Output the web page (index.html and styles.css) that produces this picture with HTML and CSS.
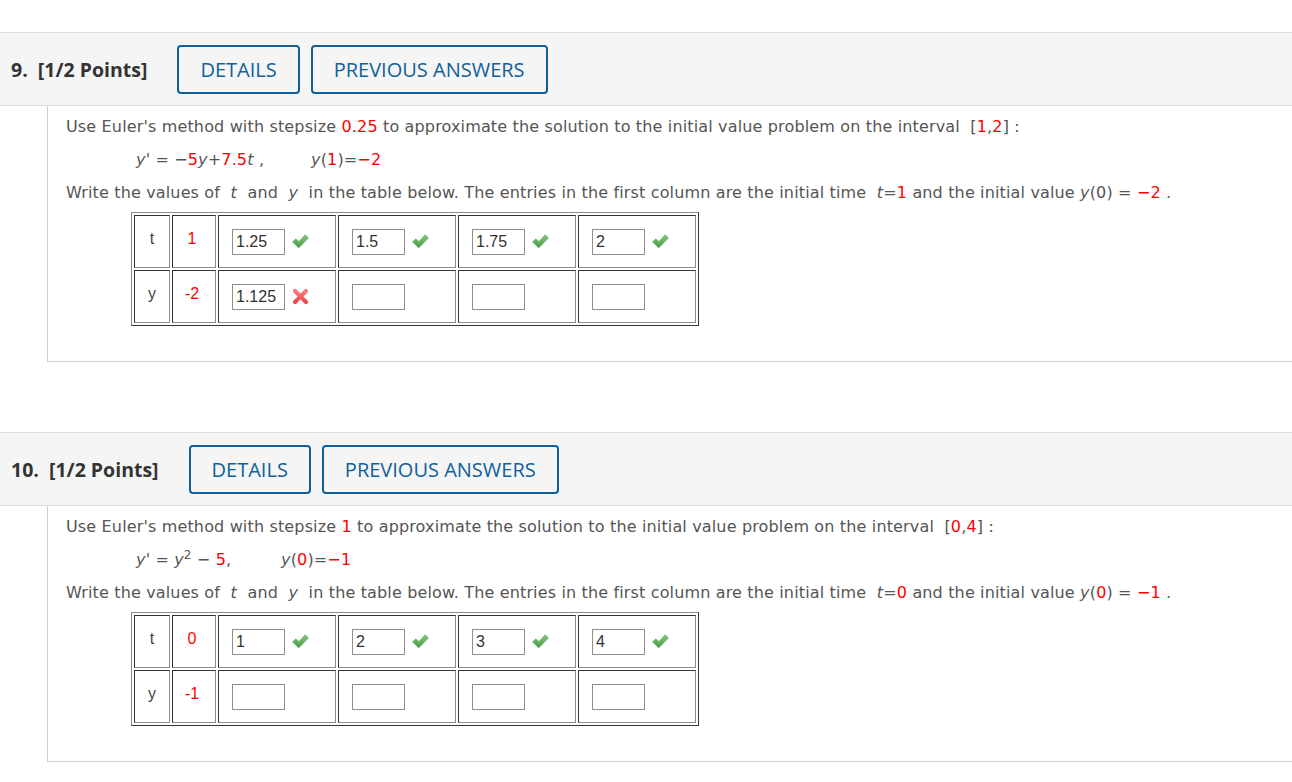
FILE: index.html
```html
<!DOCTYPE html>
<html>
<head>
<meta charset="utf-8">
<link rel="stylesheet" href="styles.css">
</head>
<body>
<svg width="0" height="0" class="defs">
  <defs>
    <linearGradient id="gck" x1="0" y1="0" x2="0" y2="1">
      <stop offset="0" stop-color="#86cf7f"/>
      <stop offset="1" stop-color="#3f9a3f"/>
    </linearGradient>
    <linearGradient id="gx" x1="0" y1="0" x2="0" y2="1">
      <stop offset="0" stop-color="#ff7b7b"/>
      <stop offset="1" stop-color="#e94848"/>
    </linearGradient>
  </defs>
</svg>

<div class="question first">
  <div class="q-header">
    <span class="q-title">9.&nbsp;&nbsp;[1/2 Points]</span>
    <button class="btn">DETAILS</button>
    <button class="btn">PREVIOUS ANSWERS</button>
  </div>
  <div class="q-body">
    <p class="line">Use Euler's method with stepsize <span class="red">0.25</span> to approximate the solution to the initial value problem on the interval &nbsp;[<span class="red">1</span>,<span class="red">2</span>] :</p>
    <p class="line eq"><span class="eq-a a1"><i>y</i>' = −<span class="red">5</span><i>y</i>+<span class="red">7.5</span><i>t</i> ,</span><span><i>y</i>(<span class="red">1</span>)=<span class="red">−2</span></span></p>
    <p class="line last">Write the values of &nbsp;<i>t</i>&nbsp; and &nbsp;<i>y</i>&nbsp; in the table below. The entries in the first column are the initial time &nbsp;<i>t</i>=<span class="red">1</span> and the initial value <i>y</i>(0) = <span class="red">−2</span> .</p>
    <table class="grid">
      <tr>
        <td class="h">t</td>
        <td class="v">1</td>
        <td class="in"><span class="box">1.25</span><svg class="ico" width="17" height="15" viewBox="0 0 17 15"><path d="M0.6 8.0 L3.8 4.8 L6.8 7.8 L13.2 0.8 L16.4 4.0 L6.8 13.8 Z" fill="url(#gck)" stroke="#4a9a4a" stroke-width="0.6" stroke-linejoin="round"/></svg></td>
        <td class="in"><span class="box">1.5</span><svg class="ico" width="17" height="15" viewBox="0 0 17 15"><path d="M0.6 8.0 L3.8 4.8 L6.8 7.8 L13.2 0.8 L16.4 4.0 L6.8 13.8 Z" fill="url(#gck)" stroke="#4a9a4a" stroke-width="0.6" stroke-linejoin="round"/></svg></td>
        <td class="in"><span class="box">1.75</span><svg class="ico" width="17" height="15" viewBox="0 0 17 15"><path d="M0.6 8.0 L3.8 4.8 L6.8 7.8 L13.2 0.8 L16.4 4.0 L6.8 13.8 Z" fill="url(#gck)" stroke="#4a9a4a" stroke-width="0.6" stroke-linejoin="round"/></svg></td>
        <td class="in"><span class="box">2</span><svg class="ico" width="17" height="15" viewBox="0 0 17 15"><path d="M0.6 8.0 L3.8 4.8 L6.8 7.8 L13.2 0.8 L16.4 4.0 L6.8 13.8 Z" fill="url(#gck)" stroke="#4a9a4a" stroke-width="0.6" stroke-linejoin="round"/></svg></td>
      </tr>
      <tr>
        <td class="h">y</td>
        <td class="v">-2</td>
        <td class="in"><span class="box">1.125</span><svg class="ico" width="17" height="17" viewBox="0 0 17 17"><path d="M3 3 L14 14 M14 3 L3 14" stroke="url(#gx)" stroke-width="4.2" stroke-linecap="round"/></svg></td>
        <td class="in"><span class="box"></span></td>
        <td class="in"><span class="box"></span></td>
        <td class="in"><span class="box"></span></td>
      </tr>
    </table>
  </div>
</div>

<div class="question second">
  <div class="q-header">
    <span class="q-title">10.&nbsp;&nbsp;[1/2 Points]</span>
    <button class="btn">DETAILS</button>
    <button class="btn">PREVIOUS ANSWERS</button>
  </div>
  <div class="q-body">
    <p class="line">Use Euler's method with stepsize <span class="red">1</span> to approximate the solution to the initial value problem on the interval &nbsp;[<span class="red">0</span>,<span class="red">4</span>] :</p>
    <p class="line eq"><span class="eq-a a2"><i>y</i>' = <i>y</i><sup>2</sup> − <span class="red">5</span>,</span><span><i>y</i>(<span class="red">0</span>)=<span class="red">−1</span></span></p>
    <p class="line last">Write the values of &nbsp;<i>t</i>&nbsp; and &nbsp;<i>y</i>&nbsp; in the table below. The entries in the first column are the initial time &nbsp;<i>t</i>=<span class="red">0</span> and the initial value <i>y</i>(<span class="red">0</span>) = <span class="red">−1</span> .</p>
    <table class="grid">
      <tr>
        <td class="h">t</td>
        <td class="v">0</td>
        <td class="in"><span class="box">1</span><svg class="ico" width="17" height="15" viewBox="0 0 17 15"><path d="M0.6 8.0 L3.8 4.8 L6.8 7.8 L13.2 0.8 L16.4 4.0 L6.8 13.8 Z" fill="url(#gck)" stroke="#4a9a4a" stroke-width="0.6" stroke-linejoin="round"/></svg></td>
        <td class="in"><span class="box">2</span><svg class="ico" width="17" height="15" viewBox="0 0 17 15"><path d="M0.6 8.0 L3.8 4.8 L6.8 7.8 L13.2 0.8 L16.4 4.0 L6.8 13.8 Z" fill="url(#gck)" stroke="#4a9a4a" stroke-width="0.6" stroke-linejoin="round"/></svg></td>
        <td class="in"><span class="box">3</span><svg class="ico" width="17" height="15" viewBox="0 0 17 15"><path d="M0.6 8.0 L3.8 4.8 L6.8 7.8 L13.2 0.8 L16.4 4.0 L6.8 13.8 Z" fill="url(#gck)" stroke="#4a9a4a" stroke-width="0.6" stroke-linejoin="round"/></svg></td>
        <td class="in"><span class="box">4</span><svg class="ico" width="17" height="15" viewBox="0 0 17 15"><path d="M0.6 8.0 L3.8 4.8 L6.8 7.8 L13.2 0.8 L16.4 4.0 L6.8 13.8 Z" fill="url(#gck)" stroke="#4a9a4a" stroke-width="0.6" stroke-linejoin="round"/></svg></td>
      </tr>
      <tr>
        <td class="h">y</td>
        <td class="v">-1</td>
        <td class="in"><span class="box"></span></td>
        <td class="in"><span class="box"></span></td>
        <td class="in"><span class="box"></span></td>
        <td class="in"><span class="box"></span></td>
      </tr>
    </table>
  </div>
</div>
</body>
</html>
```

FILE: styles.css
```css
html, body {
  margin: 0;
  padding: 0;
  background: #fff;
}
body {
  font-family: "DejaVu Sans", Verdana, sans-serif;
  color: #555;
}
.defs {
  position: absolute;
  width: 0;
  height: 0;
}
.question.first {
  margin-top: 32px;
}
.question.second {
  margin-top: 70px;
}
.q-header {
  display: flex;
  align-items: center;
  gap: 11px;
  height: 72px;
  padding-left: 11px;
  background: #f5f5f5;
  border-top: 1px solid #dcdcdc;
  border-bottom: 1px solid #dcdcdc;
}
.q-title {
  font-family: "Open Sans", sans-serif;
  font-weight: 700;
  font-size: 19.5px;
  color: #333;
  margin-right: 19px;
}
.btn {
  height: 49px;
  padding: 0 21px;
  background: transparent;
  border: 2px solid #11609a;
  border-radius: 4px;
  color: #11609a;
  font-family: "Open Sans", sans-serif;
  font-weight: 500;
  font-size: 20px;
}
.q-body {
  margin-left: 47px;
  border-left: 1px solid #cfcfcf;
  border-bottom: 1px solid #cfcfcf;
  padding: 10px 0 35px 18px;
}
.line {
  margin: 0 0 11px 0;
  font-size: 16px;
  letter-spacing: 0.15px;
  line-height: 22px;
  white-space: nowrap;
}
.line.last {
  margin-bottom: 8px;
}
.eq {
  padding-left: 70px;
}
.eq-a {
  display: inline-block;
}
.eq-a.a1 {
  width: 175px;
}
.eq-a.a2 {
  width: 145px;
}
sup {
  font-size: 12px;
  line-height: 0;
}
.red {
  color: #ff0000;
}
.grid {
  margin: 0 0 0 65px;
  border-collapse: separate;
  border-spacing: 2px;
  border: 1px solid;
  border-color: #8a8a8a #333 #333 #8a8a8a;
  font-family: "Liberation Sans", Arial, sans-serif;
  font-size: 16px;
}
.grid td {
  height: 51px;
  padding: 0;
  border: 1px solid;
  border-color: #333 #8a8a8a #8a8a8a #333;
  vertical-align: middle;
}
.grid td.h {
  width: 34px;
  text-align: center;
  color: #444;
  padding-bottom: 5px;
  height: 46px;
}
.grid td.v {
  width: 42px;
  text-align: center;
  color: #ff0000;
  padding-bottom: 5px;
  padding-right: 4px;
  width: 38px;
  height: 46px;
}
.grid td.in {
  width: 103px;
  padding-left: 13px;
  white-space: nowrap;
}
.box {
  display: inline-block;
  box-sizing: border-box;
  width: 53px;
  height: 26px;
  line-height: 24px;
  border: 1px solid #8f8f8f;
  padding: 0 0 0 3px;
  color: #333;
  font-size: 16px;
  vertical-align: middle;
  background: #fff;
}
.ico {
  vertical-align: middle;
  margin-left: 7px;
}
```
